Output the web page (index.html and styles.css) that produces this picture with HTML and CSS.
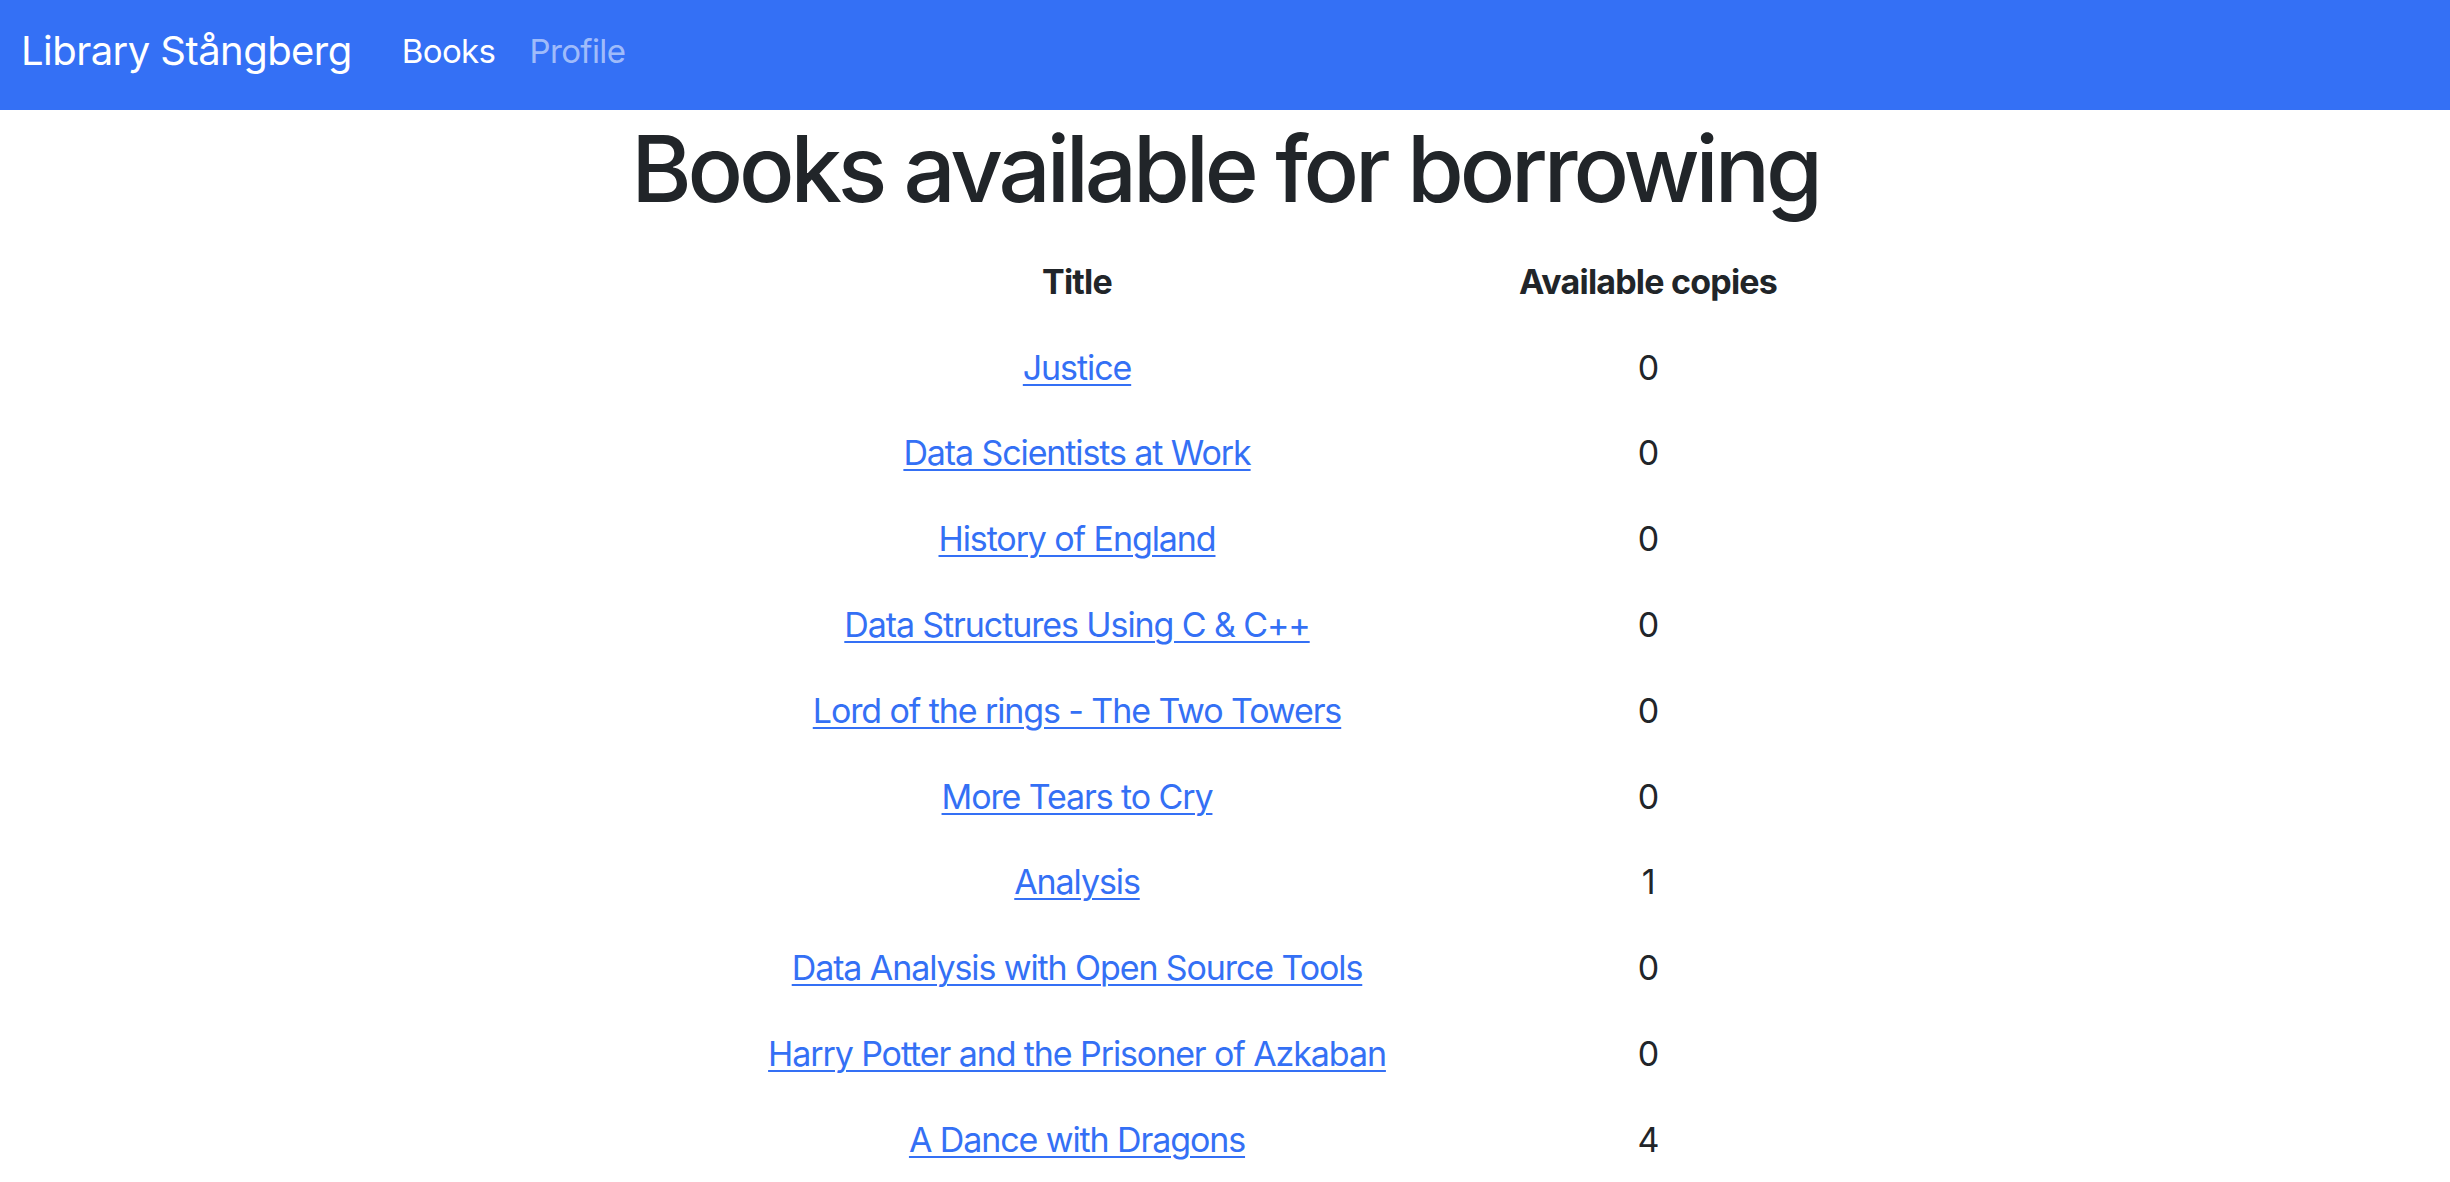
FILE: index.html
```html
<!DOCTYPE html>
<html lang="en">
<head>
<meta charset="utf-8">
<title>Library Stångberg</title>
<link rel="stylesheet" href="styles.css">
</head>
<body>
<nav class="navbar">
  <a class="brand" href="#">Library Stångberg</a>
  <ul class="nav">
    <li><a class="nav-link active" href="#">Books</a></li>
    <li><a class="nav-link" href="#">Profile</a></li>
  </ul>
</nav>
<main class="main">
  <h1 class="title">Books available for borrowing</h1>
  <table class="books">
    <colgroup><col class="col-title"><col class="col-copies"></colgroup>
    <thead>
      <tr><th>Title</th><th>Available copies</th></tr>
    </thead>
    <tbody>
      <tr><td><a href="#">Justice</a></td><td>0</td></tr>
      <tr><td><a href="#">Data Scientists at Work</a></td><td>0</td></tr>
      <tr><td><a href="#">History of England</a></td><td>0</td></tr>
      <tr><td><a href="#">Data Structures Using C &amp; C++</a></td><td>0</td></tr>
      <tr><td><a href="#">Lord of the rings - The Two Towers</a></td><td>0</td></tr>
      <tr><td><a href="#">More Tears to Cry</a></td><td>0</td></tr>
      <tr><td><a href="#">Analysis</a></td><td>1</td></tr>
      <tr><td><a href="#">Data Analysis with Open Source Tools</a></td><td>0</td></tr>
      <tr><td><a href="#">Harry Potter and the Prisoner of Azkaban</a></td><td>0</td></tr>
      <tr><td><a href="#">A Dance with Dragons</a></td><td>4</td></tr>
    </tbody>
  </table>
</main>
</body>
</html>
```
FILE: styles.css
```css
html, body {
  margin: 0;
  padding: 0;
  background: #fff;
}
body {
  font-family: Inter, "Noto Sans", "Liberation Sans", sans-serif;
  color: #212529;
  font-size: 34px;
  overflow: hidden;
}
.navbar {
  height: 110px;
  box-sizing: border-box;
  background: #3470f5;
  display: flex;
  align-items: center;
  padding: 0 0 8px 21px;
}
.brand {
  color: #fff;
  text-decoration: none;
  font-size: 40px;
  line-height: 50px;
  letter-spacing: -0.55px;
  margin-right: 50px;
}
.nav {
  list-style: none;
  margin: 0;
  padding: 0;
  display: flex;
  gap: 34px;
}
.nav-link {
  color: rgba(255, 255, 255, 0.55);
  text-decoration: none;
  font-size: 33px;
  line-height: 50px;
  letter-spacing: -0.6px;
}
.nav-link.active {
  color: #fff;
}
.main {
  text-align: center;
}
.title {
  margin: 4px 0 0;
  font-size: 92px;
  line-height: 110px;
  font-weight: 500;
  letter-spacing: -4.1px;
}
.books {
  margin: 15px auto 0;
  width: 1142px;
  table-layout: fixed;
  border-collapse: collapse;
}
.col-title { width: 846px; }
.col-copies { width: 296px; }
.books th,
.books td {
  padding: 0;
  height: 85.8px;
  text-align: center;
  vertical-align: middle;
  line-height: 50px;
  letter-spacing: -1.1px;
}
.books th {
  font-weight: 700;
  letter-spacing: -0.8px;
}
.books a {
  color: #3470f5;
  text-decoration: underline;
  text-decoration-thickness: 2px;
  text-underline-offset: 4px;
}
```
